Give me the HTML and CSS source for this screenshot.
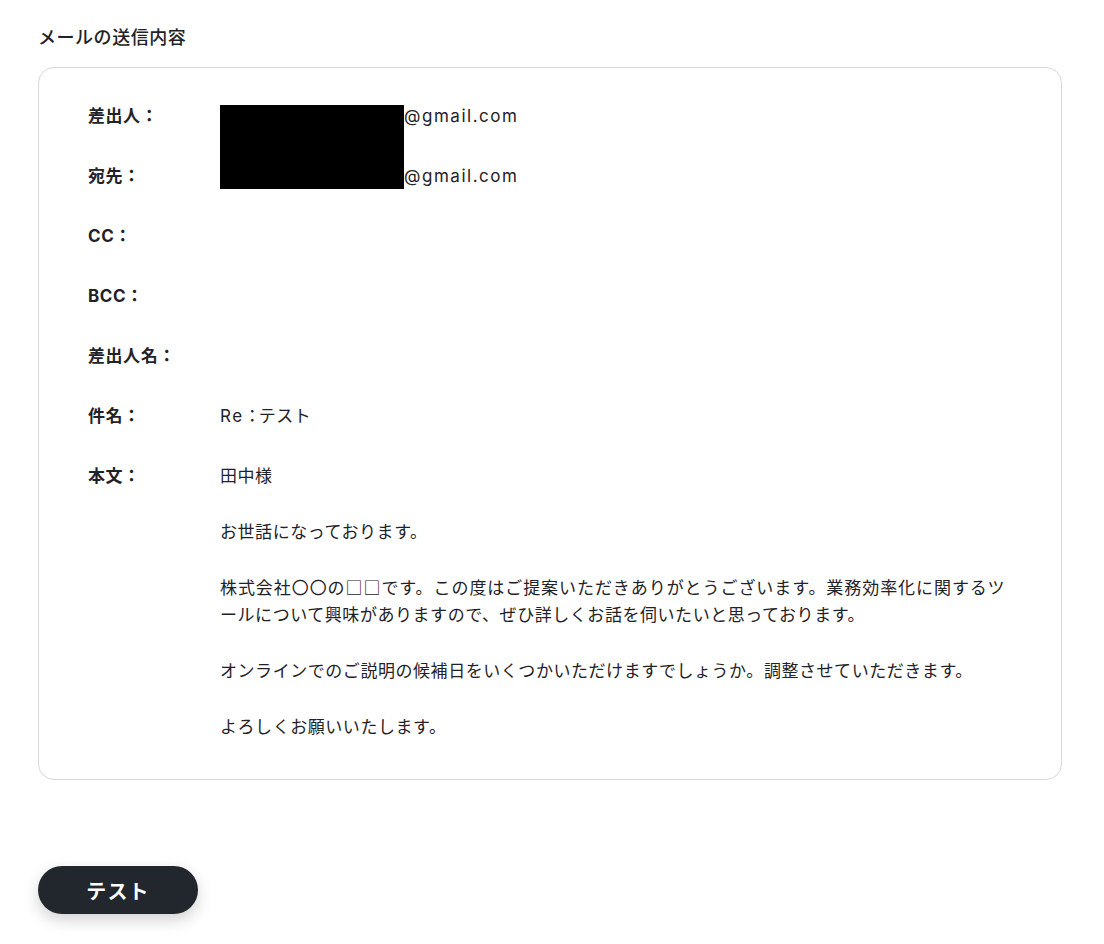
FILE: index.html
```html
<!DOCTYPE html>
<html lang="ja">
<head>
<meta charset="utf-8">
<link rel="stylesheet" href="styles.css">
</head>
<body>
<main class="page">
  <h2 class="title">メールの送信内容</h2>
  <section class="card">
    <div class="row">
      <div class="label">差出人：</div>
      <div class="value"><span class="redact-space"></span><span class="latin">@gmail.com</span><span class="redact-block"></span></div>
    </div>
    <div class="row">
      <div class="label">宛先：</div>
      <div class="value"><span class="redact-space"></span><span class="latin">@gmail.com</span></div>
    </div>
    <div class="row">
      <div class="label">CC：</div>
      <div class="value"></div>
    </div>
    <div class="row">
      <div class="label">BCC：</div>
      <div class="value"></div>
    </div>
    <div class="row">
      <div class="label">差出人名：</div>
      <div class="value"></div>
    </div>
    <div class="row">
      <div class="label">件名：</div>
      <div class="value"><span class="latin">Re</span><span class="colon">：</span>テスト</div>
    </div>
    <div class="row">
      <div class="label">本文：</div>
      <div class="value body-text">
        <p>田中様</p>
        <p>お世話になっております。</p>
        <p>株式会社〇〇の□□です。この度はご提案いただきありがとうございます。業務効率化に関するツールについて興味がありますので、ぜひ詳しくお話を伺いたいと思っております。</p>
        <p>オンラインでのご説明の候補日をいくつかいただけますでしょうか。調整させていただきます。</p>
        <p>よろしくお願いいたします。</p>
      </div>
    </div>
  </section>
  <button class="btn">テスト</button>
</main>
</body>
</html>
```
FILE: styles.css
```css
html, body {
  margin: 0;
  background: #ffffff;
}
body {
  font-family: "Inter", "Noto Sans CJK JP", sans-serif;
  color: #1f2226;
}
.page {
  padding: 24px 42px 40px 38px;
  display: flex;
  flex-direction: column;
  align-items: flex-start;
}
.title {
  margin: 0 0 15px;
  font-size: 18px;
  line-height: 28px;
  font-weight: 500;
  letter-spacing: 0.03em;
}
.card {
  align-self: stretch;
  box-sizing: border-box;
  border: 1px solid #d6d9de;
  border-radius: 16px;
  padding: 35px 56px 40px 49px;
  display: flex;
  flex-direction: column;
  gap: 33px;
}
.row {
  display: flex;
  font-size: 17px;
  line-height: 27px;
  letter-spacing: 0.55px;
}
.label {
  width: 132px;
  flex: none;
  font-weight: 700;
  min-height: 27px;
}
.value {
  flex: 1;
  position: relative;
  line-break: normal;
}
.latin {
  font-size: 17px;
  letter-spacing: 0.09em;
}
.colon {
  letter-spacing: -6px;
  margin-right: 4px;
}
.redact-space {
  display: inline-block;
  width: 184px;
  height: 1px;
}
.redact-block {
  position: absolute;
  left: 0;
  top: 1.5px;
  width: 184px;
  height: 84px;
  background: #000;
}
.body-text {
  font-family: "Noto Sans CJK JP", sans-serif;
  text-align: justify;
  margin-top: -2px;
}
.body-text p {
  margin: 0 0 29px;
}
.body-text p:last-child {
  margin-bottom: 0;
}
.btn {
  margin-top: 86px;
  width: 160px;
  height: 48px;
  border: none;
  border-radius: 24px;
  background: #22262d;
  color: #ffffff;
  font-family: "Inter", "Noto Sans CJK JP", sans-serif;
  font-size: 20px;
  font-weight: 700;
  letter-spacing: 0.06em;
  box-shadow: 0 6px 16px rgba(0, 0, 0, 0.18);
}
```
